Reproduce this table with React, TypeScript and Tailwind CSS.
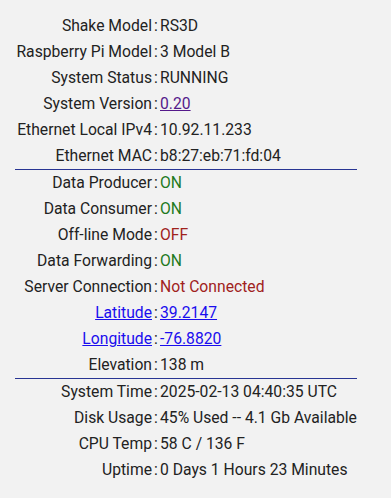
import React from "react";

type Row = { label: React.ReactNode; value: React.ReactNode };

const green = "text-[#1f7a1f]";
const red = "text-[#a0221d]";

const sections: Row[][] = [
  [
    { label: "Shake Model", value: "RS3D" },
    { label: "Raspberry Pi Model", value: "3 Model B" },
    { label: "System Status", value: "RUNNING" },
    { label: "System Version", value: <a href="#" className="text-[#551a8b] underline">0.20</a> },
    { label: "Ethernet Local IPv4", value: "10.92.11.233" },
    { label: "Ethernet MAC", value: "b8:27:eb:71:fd:04" },
  ],
  [
    { label: "Data Producer", value: <span className={green}>ON</span> },
    { label: "Data Consumer", value: <span className={green}>ON</span> },
    { label: "Off-line Mode", value: <span className={red}>OFF</span> },
    { label: "Data Forwarding", value: <span className={green}>ON</span> },
    { label: "Server Connection", value: <span className={red}>Not Connected</span> },
    { label: <a href="#" className="text-[#1a0dee] underline">Latitude</a>, value: <a href="#" className="text-[#1a0dee] underline">39.2147</a> },
    { label: <a href="#" className="text-[#1a0dee] underline">Longitude</a>, value: <a href="#" className="text-[#1a0dee] underline">-76.8820</a> },
    { label: "Elevation", value: "138 m" },
  ],
  [
    { label: "System Time", value: "2025-02-13 04:40:35 UTC" },
    { label: "Disk Usage", value: "45% Used -- 4.1 Gb Available" },
    { label: "CPU Temp", value: "58 C / 136 F" },
    { label: "Uptime", value: "0 Days 1 Hours 23 Minutes" },
  ],
];

export default function App() {
  return (
    <div
      className="w-[391px] h-[498px] bg-[#f2f2f2] text-[#222] text-[15.7px] pt-[13px] pl-[15px]"
      style={{ fontFamily: "Roboto, 'Liberation Sans', sans-serif" }}
    >
      <div className="w-[342px]">
        {sections.map((sec, si) => (
          <div key={si} className={si > 0 ? "border-t border-[#283593]" : ""}>
            {sec.map((r, ri) => (
              <div key={ri} className="flex items-center h-[26px] leading-[26px] whitespace-nowrap">
                <div className="w-[137px] text-right">{r.label}</div>
                <div className="w-[8px] text-center">:</div>
                <div>{r.value}</div>
              </div>
            ))}
          </div>
        ))}
      </div>
    </div>
  );
}
